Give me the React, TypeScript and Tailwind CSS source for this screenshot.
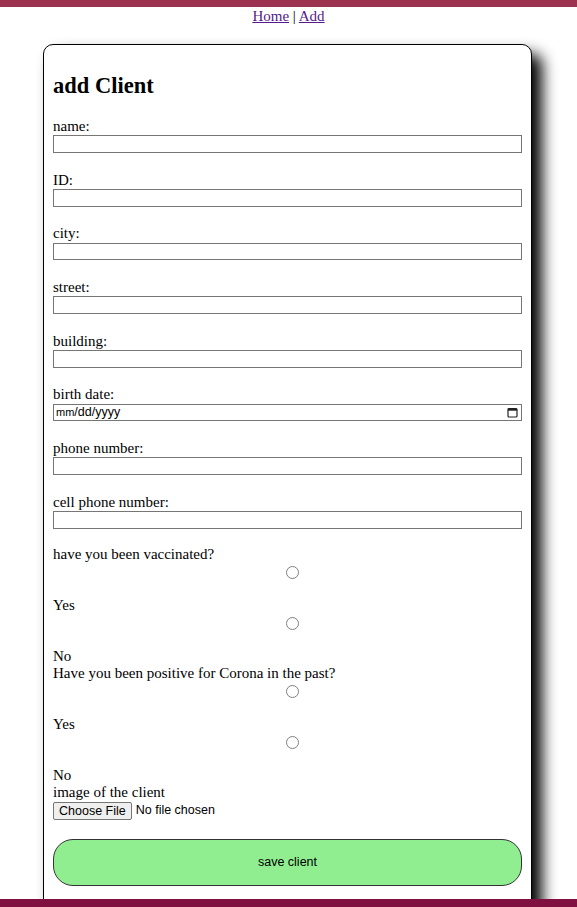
import React from "react";

const serif = { fontFamily: '"Liberation Serif", "Times New Roman", serif' };
const sans = { fontFamily: '"Liberation Sans", Arial, sans-serif' };

function Field({ label, date }: { label: string; date?: boolean }) {
  return (
    <div>
      <div className="h-[18.4px] leading-[18.4px] text-[15px] text-black">{label}</div>
      <div className="h-[17.5px] w-[469px] border border-[#767676] bg-white relative">
        {date && (
          <>
            <span className="absolute left-[2px] top-0 text-[12.5px] leading-[15px] text-black" style={sans}>
              <span className="text-[11px]">mm</span>/dd/yyyy
            </span>
            <svg className="absolute right-[3px] top-[2.5px]" width="11" height="11" viewBox="0 0 11 11">
              <rect x="1" y="1.5" width="9" height="8.5" fill="none" stroke="#222" strokeWidth="1.2" rx="1" />
              <rect x="1" y="1.5" width="9" height="2.2" fill="#222" />
            </svg>
          </>
        )}
      </div>
      <div className="h-[17.8px]" />
    </div>
  );
}

function Radio() {
  return (
    <div className="h-[33.2px] flex justify-center pl-[9px]">
      <span className="mt-[2px] w-[13px] h-[13px] rounded-full border border-[#808080] bg-white" />
    </div>
  );
}

function Line({ children }: { children: React.ReactNode }) {
  return <div className="h-[17.5px] leading-[17.5px] text-[15px] text-black whitespace-nowrap">{children}</div>;
}

export default function App() {
  return (
    <div className="min-h-screen bg-white" style={serif}>
      <div className="h-[7px] bg-[#9b3350]" />
      <div className="h-[18.4px] leading-[18.4px] text-center text-[15px] text-black">
        <a href="#" className="underline text-[#551a8b]">Home</a>
        <span> | </span>
        <a href="#" className="underline text-[#551a8b]">Add</a>
      </div>
      <div className="h-[18.6px]" />
      <div className="ml-[43px] w-[489px] border border-black rounded-[10px] shadow-[10px_10px_15px_black] bg-white pl-[9px] pr-[9px] pt-[27px] pb-[40px]">
        <h2 className="text-[22.5px] font-bold leading-[27.6px] h-[27.6px] text-black m-0">add Client</h2>
        <div className="h-[17.4px]" />
        <Field label="name:" />
        <Field label="ID:" />
        <Field label="city:" />
        <Field label="street:" />
        <Field label="building:" />
        <Field label="birth date:" date />
        <Field label="phone number:" />
        <Field label="cell phone number:" />
        <Line>have you been vaccinated?</Line>
        <Radio />
        <Line>Yes</Line>
        <Radio />
        <Line>No</Line>
        <Line>Have you been positive for Corona in the past?</Line>
        <Radio />
        <Line>Yes</Line>
        <Radio />
        <Line>No</Line>
        <Line>image of the client</Line>
        <div className="h-[18px] flex items-center text-[12.5px] text-black" style={sans}>
          <span className="h-[18px] px-[5px] leading-[16px] bg-[#efefef] border border-[#767676] rounded-[2px]">Choose File</span>
          <span className="ml-[4px]">No file chosen</span>
        </div>
        <div className="h-[19px]" />
        <button
          className="w-[469px] h-[47px] rounded-[20px] border border-[#333] bg-[#90ee90] text-[12.5px] text-black"
          style={sans}
        >
          save client
        </button>
      </div>
      <div className="fixed bottom-0 left-0 right-0 h-[8px] bg-[#801040]" />
    </div>
  );
}
